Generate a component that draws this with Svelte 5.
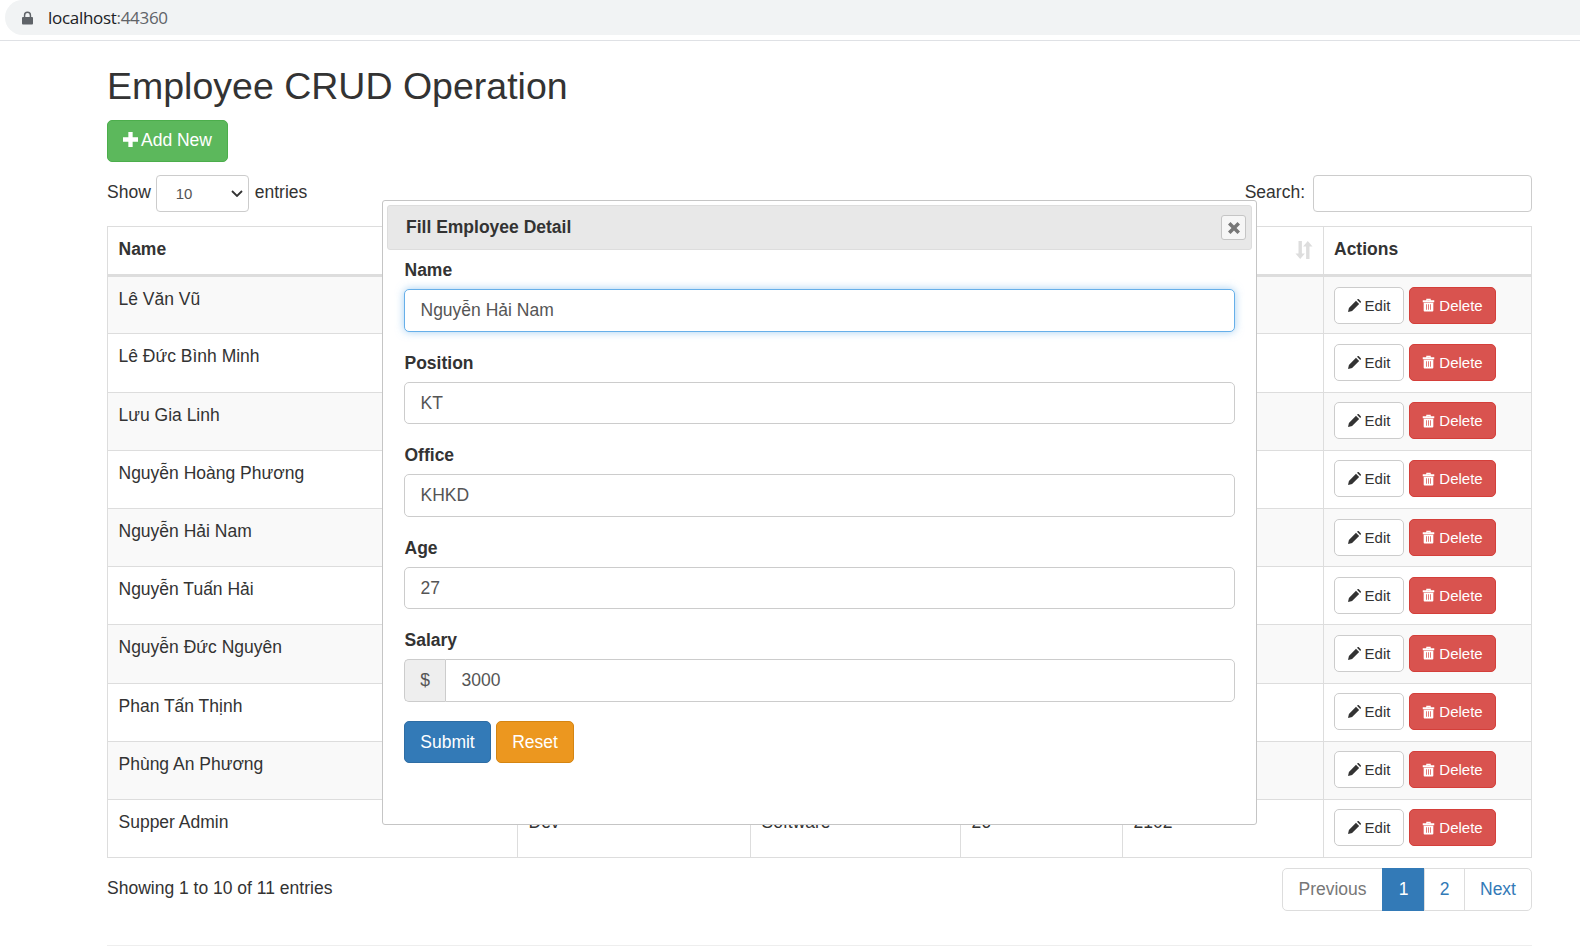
<script>
    const rows = [
        { name: "Lê Văn Vũ", position: "Dev", office: "Software", age: 25, salary: 1800 },
        { name: "Lê Đức Bình Minh", position: "Dev", office: "Software", age: 24, salary: 1500 },
        { name: "Lưu Gia Linh", position: "HR", office: "KHKD", age: 26, salary: 1400 },
        { name: "Nguyễn Hoàng Phương", position: "Dev", office: "Software", age: 28, salary: 2000 },
        { name: "Nguyễn Hải Nam", position: "KT", office: "KHKD", age: 27, salary: 3000 },
        { name: "Nguyễn Tuấn Hải", position: "Dev", office: "Software", age: 29, salary: 2200 },
        { name: "Nguyễn Đức Nguyên", position: "Dev", office: "Software", age: 23, salary: 1300 },
        { name: "Phan Tấn Thịnh", position: "BA", office: "Software", age: 30, salary: 2500 },
        { name: "Phùng An Phương", position: "KT", office: "KHKD", age: 25, salary: 1600 },
        { name: "Supper Admin", position: "Dev", office: "Software", age: 26, salary: 2102 }
    ];

    const fields = [
        { label: "Name", value: "Nguyễn Hải Nam", focus: true },
        { label: "Position", value: "KT" },
        { label: "Office", value: "KHKD" },
        { label: "Age", value: "27" }
    ];
</script>

<div class="address">
    <div class="pill">
        <svg class="lock" viewBox="0 0 12 14" width="11" height="14">
            <path d="M2 6V4a4 4 0 0 1 8 0v2h1a1 1 0 0 1 1 1v6a1 1 0 0 1-1 1H1a1 1 0 0 1-1-1V7a1 1 0 0 1 1-1zm1.6 0h4.8V4a2.4 2.4 0 0 0-4.8 0z" fill="#5f6368" />
        </svg>
        <span class="host">localhost</span><span class="port">:44360</span>
    </div>
</div>

<div class="page">
    <h2>Employee CRUD Operation</h2>
    <button class="btn add">
        <svg viewBox="0 0 14 14" width="15" height="15"><path d="M5 0h4v5h5v4H9v5H5V9H0V5h5z" fill="#fff" /></svg>
        Add New
    </button>

    <div class="tools">
        <div class="length">
            <span>Show</span>
            <div class="select">
                <select><option>10</option><option>25</option></select>
                <svg viewBox="0 0 12 7" width="12" height="7"><path d="M1 1l5 5 5-5" fill="none" stroke="#333" stroke-width="1.8" /></svg>
            </div>
            <span class="after">entries</span>
        </div>
        <div class="search">
            <span>Search:</span>
            <input type="text" />
        </div>
    </div>

    <table>
        <colgroup>
            <col style="width: 410px" />
            <col style="width: 233px" />
            <col style="width: 210px" />
            <col style="width: 162px" />
            <col style="width: 201px" />
            <col style="width: 208px" />
        </colgroup>
        <thead>
            <tr>
                <th>Name</th>
                <th>Position</th>
                <th>Office</th>
                <th>Age</th>
                <th class="sorted">
                    Salary
                    <svg class="sort" viewBox="0 0 18 18" width="18" height="18">
                        <path d="M3.5 0h3.4v12.5h3L5.2 18 .5 12.5h3zM11.1 18h3.4V5.5h3L12.8 0 8.1 5.5h3z" fill="#ddd" />
                    </svg>
                </th>
                <th class="last">Actions</th>
            </tr>
        </thead>
        <tbody>
            {#each rows as row}
                <tr>
                    <td>{row.name}</td>
                    <td>{row.position}</td>
                    <td>{row.office}</td>
                    <td>{row.age}</td>
                    <td>{row.salary}</td>
                    <td class="actions">
                        <div class="action-row">
                            <button class="btn small edit">
                                <svg viewBox="0 0 14 14" width="13" height="13">
                                    <path d="M0 14l1-4.4L8.6 2 12 5.4 4.4 13zM9.7.9l.6-.6a1 1 0 0 1 1.4 0l2 2a1 1 0 0 1 0 1.4l-.6.6z" fill="#333" />
                                </svg>
                                Edit
                            </button>
                            <button class="btn small delete">
                                <svg viewBox="0 0 14 14" width="13" height="14">
                                    <path fill-rule="evenodd" d="M.8 2h3.8V.4h4.8V2h3.8v2H.8zM5.8 1.5V2h2.4v-.5zM1.8 4.6h10.4v8.4a1 1 0 0 1-1 1H2.8a1 1 0 0 1-1-1zM4.4 6.2v5.8h.8V6.2zm2.2 0v5.8h.8V6.2zm2.2 0v5.8h.8V6.2z" fill="#fff" />
                                </svg>
                                Delete
                            </button>
                        </div>
                    </td>
                </tr>
            {/each}
        </tbody>
    </table>

    <div class="footer">
        <span>Showing 1 to 10 of 11 entries</span>
        <div class="pager">
            <span class="prev">Previous</span>
            <span class="current">1</span>
            <span class="num">2</span>
            <span class="next">Next</span>
        </div>
    </div>
    <hr />

    <div class="dialog">
        <div class="title">
            <span>Fill Employee Detail</span>
            <button class="close" aria-label="Close">
                <svg viewBox="0 0 12 12" width="12" height="12">
                    <path d="M2.5 0L6 3.5 9.5 0 12 2.5 8.5 6 12 9.5 9.5 12 6 8.5 2.5 12 0 9.5 3.5 6 0 2.5z" fill="#777" />
                </svg>
            </button>
        </div>
        <form>
            {#each fields as field}
                <div class="group">
                    <label for={field.label}>{field.label}</label>
                    <input id={field.label} class="control" class:focus={field.focus} value={field.value} />
                </div>
            {/each}
            <div class="group">
                <label for="salary">Salary</label>
                <div class="input-group">
                    <span class="addon">$</span>
                    <input id="salary" class="control" value="3000" />
                </div>
            </div>
            <div class="buttons">
                <button type="button" class="btn submit">Submit</button>
                <button type="button" class="btn reset">Reset</button>
            </div>
        </form>
    </div>
</div>

<style>
    :global(body) {
        margin: 0;
        background: #fff;
        overflow: hidden;
    }

    .address {
        height: 40px;
        border-bottom: 1px solid #dfe1e5;
        box-sizing: content-box;
    }

    .pill {
        display: flex;
        align-items: center;
        height: 35px;
        margin-left: 5px;
        padding-left: 17px;
        background: #f1f3f4;
        border-radius: 18px 0 0 18px;
        font: 17px "Open Sans", sans-serif;
        letter-spacing: -0.3px;
    }

    .lock {
        margin-right: 15px;
    }

    .host {
        color: #202124;
    }

    .port {
        color: #5f6368;
    }

    .page {
        position: relative;
        width: 1425px;
        margin-left: 107px;
        font: 17.5px/25px "Liberation Sans", Arial, sans-serif;
        color: #333;
    }

    h2 {
        margin: 25px 0 12.5px;
        font-size: 37.5px;
        font-weight: 500;
        line-height: 41.25px;
    }

    .btn {
        display: inline-flex;
        align-items: center;
        justify-content: center;
        box-sizing: border-box;
        border: 1px solid transparent;
        border-radius: 5px;
        font: inherit;
        padding: 0;
    }

    .add {
        width: 121px;
        height: 42px;
        gap: 3px;
        background: #5cb85c;
        border-color: #4cae4c;
        color: #fff;
    }

    .add svg {
        margin-top: -3px;
    }

    .tools {
        display: flex;
        justify-content: space-between;
        align-items: center;
        margin: 13px 0 14px;
        height: 37.5px;
    }

    .length,
    .search {
        display: flex;
        align-items: center;
        gap: 5px;
    }

    .length span,
    .search span {
        padding-bottom: 2px;
    }

    .length .after {
        margin-left: 1px;
    }

    .select {
        position: relative;
        width: 93px;
        height: 37px;
    }

    .select select {
        width: 100%;
        height: 100%;
        box-sizing: border-box;
        padding: 0 0 0 19px;
        appearance: none;
        background: #fff;
        border: 1px solid #ccc;
        border-radius: 4px;
        font: 15px "Liberation Sans", sans-serif;
        color: #555;
    }

    .select svg {
        position: absolute;
        right: 6px;
        top: 15px;
    }

    .search {
        gap: 8px;
    }

    .search input {
        width: 219px;
        height: 37px;
        box-sizing: border-box;
        border: 1px solid #ccc;
        border-radius: 4px;
    }

    table {
        width: 1424px;
        table-layout: fixed;
        border-collapse: collapse;
    }

    th,
    td {
        border: 1px solid #ddd;
        padding: 10px 10px 10px 10.5px;
        text-align: left;
        vertical-align: top;
    }

    th {
        height: 49px;
        box-sizing: border-box;
        border-bottom: 3px solid #ddd;
    }

    th.last {
        padding-left: 10px;
    }

    .sorted {
        position: relative;
    }

    .sort {
        position: absolute;
        right: 10px;
        top: 14px;
    }

    tbody tr {
        height: 58.2px;
    }

    tbody tr:nth-child(odd) {
        background: #f9f9f9;
    }

    td.actions {
        padding: 9.5px 10px 0;
    }

    .action-row {
        display: flex;
        gap: 5px;
    }

    .small {
        height: 37px;
        gap: 4px;
        font-size: 15px;
    }

    .edit {
        width: 70px;
        background: #fff;
        border-color: #ccc;
        color: #333;
    }

    .delete {
        width: 87px;
        background: #d9534f;
        border-color: #d43f3a;
        color: #fff;
    }

    .footer {
        display: flex;
        justify-content: space-between;
        margin-top: 10px;
    }

    .footer > span {
        padding-top: 8px;
    }

    .pager {
        display: flex;
        height: 43px;
        line-height: 41px;
    }

    .pager span {
        box-sizing: border-box;
        border: 1px solid #ddd;
        text-align: center;
        color: #337ab7;
        margin-left: -1px;
    }

    .pager .prev {
        width: 101px;
        color: #777;
        border-radius: 5px 0 0 5px;
    }

    .pager .current {
        width: 43px;
        background: #337ab7;
        border-color: #337ab7;
        color: #fff;
    }

    .pager .num {
        width: 41px;
    }

    .pager .next {
        width: 68px;
        border-radius: 0 5px 5px 0;
    }

    hr {
        margin: 34px 0 0;
        border: 0;
        border-top: 1px solid #eee;
    }

    .dialog {
        position: absolute;
        left: 275px;
        top: 134px;
        width: 875px;
        height: 625px;
        box-sizing: border-box;
        padding: 4px;
        background: #fff;
        border: 1px solid #c5c5c5;
        border-radius: 3px;
    }

    .title {
        display: flex;
        justify-content: space-between;
        align-items: center;
        box-sizing: border-box;
        height: 45px;
        padding: 0 5px 0 18px;
        background: #e8e8e8;
        border: 1px solid #ddd;
        border-radius: 3px;
        font-weight: 700;
    }

    .close {
        display: flex;
        align-items: center;
        justify-content: center;
        box-sizing: border-box;
        width: 25px;
        height: 25px;
        padding: 0;
        background: #f6f6f6;
        border: 1px solid #c5c5c5;
        border-radius: 3px;
    }

    form {
        padding: 8px 17px 0;
    }

    .group {
        margin-bottom: 18.75px;
    }

    label {
        display: block;
        margin: 0 0 6.25px 0.5px;
        font-weight: 700;
    }

    .control {
        display: block;
        width: 100%;
        height: 42.5px;
        box-sizing: border-box;
        padding: 0 15.5px;
        border: 1px solid #ccc;
        border-radius: 5px;
        background: #fff;
        font: inherit;
        color: #555;
        outline: none;
    }

    .control.focus {
        border-color: #66afe9;
        box-shadow: 0 0 8px rgba(102, 175, 233, 0.6);
    }

    .input-group {
        display: flex;
    }

    .addon {
        box-sizing: border-box;
        width: 41px;
        height: 42.5px;
        line-height: 40.5px;
        text-align: center;
        background: #eee;
        border: 1px solid #ccc;
        border-right: 0;
        border-radius: 5px 0 0 5px;
        color: #555;
    }

    .input-group .control {
        flex: 1;
        border-radius: 0 5px 5px 0;
    }

    .buttons {
        display: flex;
        gap: 5px;
    }

    .buttons .btn {
        height: 42px;
        padding-top: 1px;
        color: #fff;
    }

    .submit {
        width: 87px;
        background: #337ab7;
        border-color: #2e6da4;
    }

    .reset {
        width: 78px;
        background: #ec971f;
        border-color: #d58512;
    }
</style>
